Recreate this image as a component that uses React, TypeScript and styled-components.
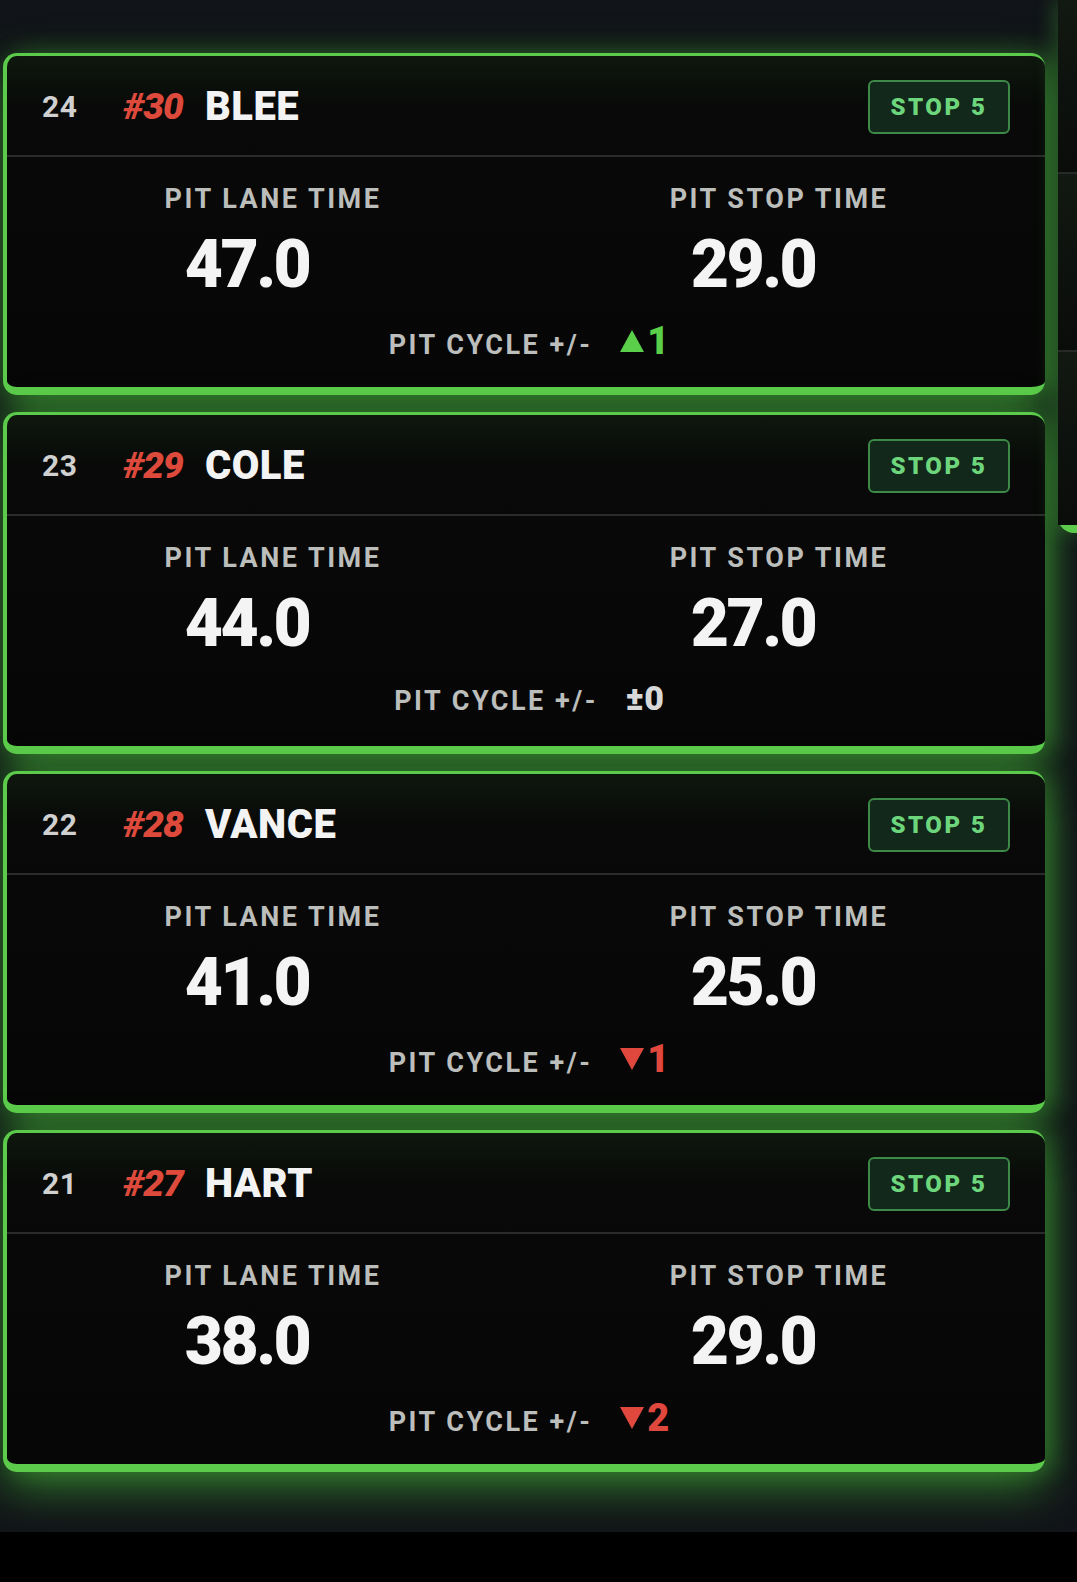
import { createGlobalStyle, styled } from "styled-components"

type Trend = "up" | "down" | "even"

interface PitRow {
  pos: number
  car: string
  driver: string
  laneTime: string
  stopTime: string
  stop: number
  trend: Trend
  delta: number
}

const rows: PitRow[] = [
  { pos: 24, car: "#30", driver: "BLEE", laneTime: "47.0", stopTime: "29.0", stop: 5, trend: "up", delta: 1 },
  { pos: 23, car: "#29", driver: "COLE", laneTime: "44.0", stopTime: "27.0", stop: 5, trend: "even", delta: 0 },
  { pos: 22, car: "#28", driver: "VANCE", laneTime: "41.0", stopTime: "25.0", stop: 5, trend: "down", delta: 1 },
  { pos: 21, car: "#27", driver: "HART", laneTime: "38.0", stopTime: "29.0", stop: 5, trend: "down", delta: 2 },
]

const GlobalStyle = createGlobalStyle`
  * { box-sizing: border-box; }
  body {
    margin: 0;
    background: #000;
    font-family: Roboto, "Noto Sans", "DejaVu Sans", sans-serif;
  }
`

const Page = styled.div`
  width: 1077px;
  height: 1582px;
  overflow: hidden;
  background: #000;
`

const Stage = styled.div`
  height: 1532px;
  display: flex;
  gap: 13px;
  padding-left: 3px;
  overflow: hidden;
  background: #111418;
`

const CardList = styled.div`
  flex: 0 0 1042px;
  display: flex;
  flex-direction: column;
  gap: 17px;
  padding-top: 53px;
`

const SidePanel = styled.div`
  flex: 0 0 80px;
  height: 533px;
  display: flex;
  flex-direction: column;
  background: #0b0e0b;
  border-bottom: 8px solid #5ccb4b;
  border-bottom-left-radius: 16px;
  box-shadow: -6px 0 18px rgba(70, 170, 60, 0.3);
`

const SideSection = styled.div<{ $h: number }>`
  height: ${({ $h }) => $h}px;
  border-bottom: 2px solid #262a26;
  background: linear-gradient(180deg, #121812 0%, #0a0c0a 100%);
  &:last-child {
    border-bottom: none;
    flex: 1;
  }
`

const Card = styled.div`
  height: 342px;
  display: flex;
  flex-direction: column;
  border-style: solid;
  border-color: #5ccb4b;
  border-width: 3px 0 8px 4px;
  border-radius: 14px;
  background: linear-gradient(180deg, #0e170e 0%, #080908 16%, #060606 100%);
  box-shadow:
    0 16px 46px rgba(72, 190, 58, 0.58),
    10px 0 22px rgba(60, 160, 50, 0.35);
`

const Header = styled.div`
  height: 101px;
  flex: 0 0 101px;
  display: flex;
  align-items: center;
  padding: 2px 35px 0 35px;
  border-bottom: 2px solid #2a2b2a;
`

const Pos = styled.span`
  font-size: 30px;
  font-weight: 700;
  color: #cfd0cf;
  margin-right: 46px;
  letter-spacing: 0.5px;
`

const CarNo = styled.span`
  font-size: 37px;
  font-weight: 900;
  font-style: italic;
  color: #dd4a3c;
  margin-right: 22px;
  letter-spacing: -1px;
`

const Driver = styled.span`
  font-size: 40px;
  font-weight: 900;
  color: #f3f3f3;
  letter-spacing: 0.5px;
`

const StopBadge = styled.div`
  margin-left: auto;
  width: 142px;
  height: 54px;
  display: flex;
  align-items: center;
  justify-content: center;
  border: 2px solid #3d8a48;
  border-radius: 6px;
  background: #12281a;
  color: #6dd67c;
  font-size: 24px;
  font-weight: 900;
  letter-spacing: 2.5px;
`

const Metrics = styled.div`
  display: grid;
  grid-template-columns: 1fr 1fr;
  padding: 28px 13px 0;
`

const Metric = styled.div`
  display: flex;
  flex-direction: column;
  align-items: center;
`

const Label = styled.div`
  font-size: 27px;
  line-height: 28px;
  font-weight: 700;
  color: #bcbebc;
  letter-spacing: 2.5px;
`

const Value = styled.div`
  margin-top: 19px;
  padding-right: 52px;
  font-size: 66px;
  line-height: 66px;
  font-weight: 900;
  color: #f4f4f4;
  letter-spacing: -2.5px;
`

const Cycle = styled.div`
  display: flex;
  align-items: baseline;
  justify-content: center;
  gap: 28px;
  margin-top: 21px;
  padding-left: 6px;
`

const CycleLabel = styled.span`
  font-size: 27px;
  font-weight: 700;
  color: #bcbebc;
  letter-spacing: 2.5px;
`

const Delta = styled.span<{ $trend: Trend }>`
  display: inline-flex;
  align-items: baseline;
  gap: 3px;
  font-size: ${({ $trend }) => ($trend === "even" ? "34px" : "38px")};
  font-weight: 900;
  color: ${({ $trend }) =>
    $trend === "up" ? "#59cf4a" : $trend === "down" ? "#e0483d" : "#d8d8d8"};
  svg {
    align-self: center;
  }
`

function Arrow({ trend }: { trend: Trend }) {
  if (trend === "even") return <>±</>
  const color = trend === "up" ? "#59cf4a" : "#e0483d"
  const points = trend === "up" ? "12,0 24,22 0,22" : "0,0 24,0 12,22"
  return (
    <svg width="24" height="22" viewBox="0 0 24 22">
      <polygon points={points} fill={color} />
    </svg>
  )
}

function PitCard({ row }: { row: PitRow }) {
  return (
    <Card>
      <Header>
        <Pos>{row.pos}</Pos>
        <CarNo>{row.car}</CarNo>
        <Driver>{row.driver}</Driver>
        <StopBadge>STOP {row.stop}</StopBadge>
      </Header>
      <Metrics>
        <Metric>
          <Label>PIT LANE TIME</Label>
          <Value>{row.laneTime}</Value>
        </Metric>
        <Metric>
          <Label>PIT STOP TIME</Label>
          <Value>{row.stopTime}</Value>
        </Metric>
      </Metrics>
      <Cycle>
        <CycleLabel>PIT CYCLE +/-</CycleLabel>
        <Delta $trend={row.trend}>
          <Arrow trend={row.trend} />
          {row.delta}
        </Delta>
      </Cycle>
    </Card>
  )
}

export default function App() {
  return (
    <Page>
      <GlobalStyle />
      <Stage>
        <CardList>
          {rows.map((row) => (
            <PitCard key={row.pos} row={row} />
          ))}
        </CardList>
        <SidePanel>
          <SideSection $h={174} />
          <SideSection $h={178} />
          <SideSection $h={0} />
        </SidePanel>
      </Stage>
    </Page>
  )
}
